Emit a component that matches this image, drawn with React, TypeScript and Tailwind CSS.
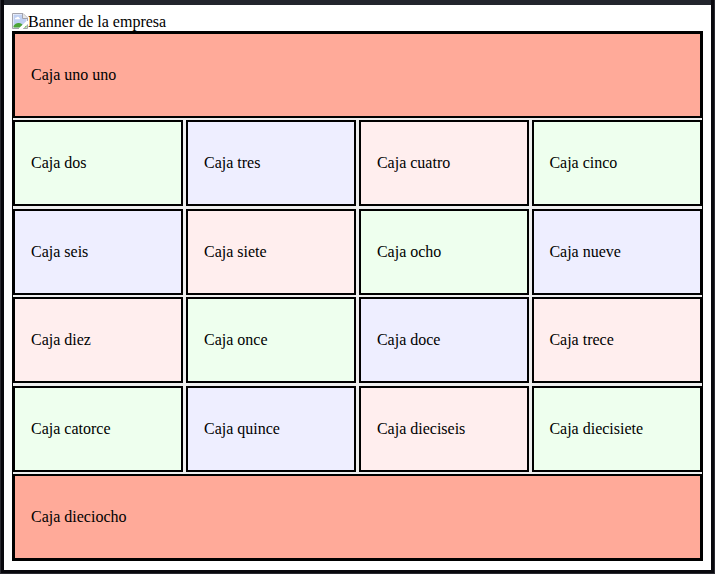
const colors = ["bg-[#eeffee]", "bg-[#eeeeff]", "bg-[#ffeeee]"];

const names = [
  "dos", "tres", "cuatro", "cinco",
  "seis", "siete", "ocho", "nueve",
  "diez", "once", "doce", "trece",
  "catorce", "quince", "dieciseis", "diecisiete",
];

function Box({ label, className }: { label: string; className: string }) {
  return (
    <div className={`flex items-center border-2 border-black ${className}`}>
      <span>{label}</span>
    </div>
  );
}

function BrokenImage() {
  return (
    <svg width="16" height="16" viewBox="0 0 16 16" className="shrink-0">
      <path d="M.5.5H11L15.5 5V15.5H.5Z" fill="#fff" />
      <path d="M1.5 1.5H10.5V5.5H14.5V8L7.5 14.5H1.5Z" fill="#bfd0f3" />
      <path d="M3 6c0-1.2 1-1.6 1.6-1.5C5 3.3 7 3.5 7 4.8c1 0 1.2 1.2.5 1.5H3Z" fill="#fff" />
      <path d="M1.5 14.5V13C3 10.5 5.3 9.7 7 10.1C8.5 10.3 9.5 11 10.5 11.7L7.5 14.5Z" fill="#4ba536" />
      <path d="M11.5 14.5L14.5 12V14.5Z" fill="#4ba536" />
      <path d="M7 15.5H.5V.5H11L15.5 5V8M15.5 11V15.5H11" fill="none" stroke="#a3a3ad" />
      <path d="M10.5 1V5.5H15" fill="none" stroke="#a3a3ad" />
      <path d="M11 1L15 5H11Z" fill="#e8e8e8" />
      <path d="M7 16L16 7.5V11L10.5 16Z" fill="#fff" />
    </svg>
  );
}

export default function App() {
  return (
    <div className="box-border h-[574px] w-[715px] border border-t-0 border-[#292930] bg-[#08080d] font-['Liberation_Serif',serif] text-base leading-[18px] text-black">
      <div className="h-[573px] border-x-3 border-b-3 border-[#08080d] bg-white">
        <div className="h-[5px] bg-[#22252d]" />
        <div className="px-2 pt-2">
          <div className="flex h-[18px] items-start">
            <BrokenImage />
            <span>Banner de la empresa</span>
          </div>
          <main className="grid h-[530px] grid-cols-4 grid-rows-6 gap-x-[2.85px] gap-y-[2.4px] border border-black bg-[#eeeeee]">
            <Box label="Caja uno uno" className="col-span-4 bg-[#ffaa99] pl-4" />
            {names.map((name, i) => (
              <Box
                key={name}
                label={`Caja ${name}`}
                className={`${colors[i % 3]} ${i % 4 === 3 ? "pl-[15.5px]" : "pl-4"}`}
              />
            ))}
            <Box label="Caja dieciocho" className="col-span-4 bg-[#ffaa99] pl-4" />
          </main>
        </div>
      </div>
    </div>
  );
}
